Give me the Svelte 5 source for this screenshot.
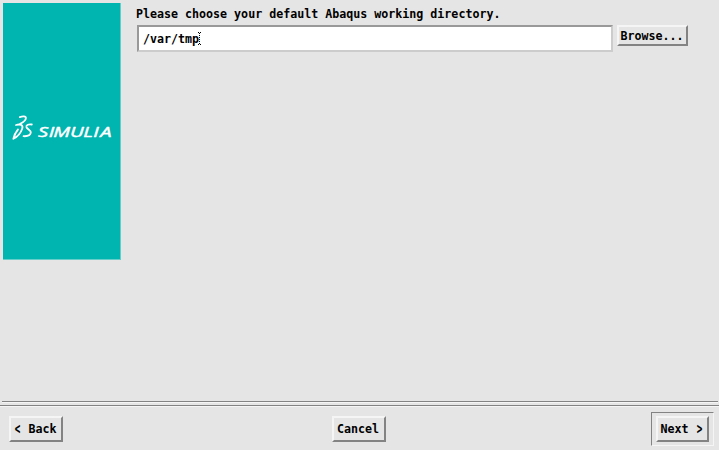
<script>
  let directory = $state('/var/tmp');
</script>

<div class="wizard">
  <main>
    <aside>
      <svg width="117" height="256" viewBox="3 3 117 256" aria-label="DS Simulia">
        <g class="mark">
          <path d="M19.8 117.1C22.5 116.1 25.9 116 25.9 117.9C25.9 119.6 22.8 122.4 20.2 123.8" />
          <path d="M16 125C20.8 123.6 23.4 125.2 22.2 128.8C20.8 132.8 17.6 136.8 13.4 138.8C14 136 15.8 132.2 18 129.4" />
          <path d="M31.8 124.5C28.7 123.9 26 125 26.4 127C26.9 129.2 31.2 130.3 30.8 132.7C30.4 135.3 27.1 136.4 23.6 136.2" />
        </g>
        <g transform="translate(0 137) scale(1.4 1)">
          <text x="27.2 34.9 38.1 50 59.4 66.6 71.6" y="0">SIMULIA</text>
        </g>
      </svg>
    </aside>
    <section>
      <div class="label">Please choose your default Abaqus working directory.</div>
      <div class="row">
        <div class="field"><span>{directory}</span><svg class="caret" width="3" height="13" viewBox="0 0 3 13" shape-rendering="crispEdges"><path d="M0 0h1v1H0zM2 0h1v1H2zM1 1h1v1H1zM1 3h1v1H1zM1 5h1v1H1zM1 7h1v1H1zM1 9h1v1H1zM1 11h1v1H1zM0 12h1v1H0zM2 12h1v1H2z" /></svg></div>
        <button class="browse">Browse...</button>
      </div>
    </section>
  </main>
  <div class="rule"></div>
  <footer>
    <button><span class="arrow">&lt;</span> Back</button>
    <button class="cancel">Cancel</button>
    <div class="default"><button>Next <span class="arrow">&gt;</span></button></div>
  </footer>
</div>

<style>
  :global(body) { margin: 0; background: #e5e5e5; }
  .wizard {
    box-sizing: border-box;
    width: 719px;
    height: 450px;
    display: flex;
    flex-direction: column;
    overflow: hidden;
    background: #e5e5e5;
    color: #000;
    font: bold 11.65px/16px "DejaVu Sans Mono", monospace;
  }
  main { height: 401px; display: flex; box-sizing: border-box; padding: 3px 0 0 3px; }
  aside {
    width: 117px;
    height: 256px;
    background: #00b4af;
    border-right: 1px solid #65cdca;
    border-bottom: 1px solid #65cdca;
  }
  aside svg { display: block; }
  .mark { fill: none; stroke: #fff; stroke-width: 1.8; stroke-linecap: round; stroke-linejoin: round; }
  text { font: italic 500 14.4px "Open Sans", sans-serif; fill: #fff; stroke: #fff; stroke-width: 0.45; stroke-linejoin: round; }
  section { padding: 3px 0 0 16px; }
  .label { height: 16px; margin-left: -1px; }
  .row { display: flex; gap: 4px; margin-top: 3px; align-items: flex-start; }
  .field {
    box-sizing: border-box;
    width: 476px;
    height: 27px;
    display: flex;
    align-items: center;
    padding-left: 4px;
    background: #fff;
    border: 2px solid;
    border-color: #999 #ccc #ccc #999;
  }
  .field span { width: 55px; height: 16px; }
  .caret { flex: none; }
  button {
    box-sizing: border-box;
    width: 54px;
    height: 26px;
    padding: 0 1px 1px 0;
    border: 2px solid;
    border-color: #f5f5f5 #838383 #838383 #f5f5f5;
    border-radius: 0;
    background: #e5e5e5;
    color: #000;
    font: inherit;
    text-align: center;
    white-space: pre;
  }
  .arrow { display: inline-block; transform: scale(0.8, 1.35); }
  .browse { width: 71px; height: 21px; padding: 0 1px 0 0; line-height: 16px; }
  .cancel { margin-left: 3px; }
  .rule {
    box-sizing: border-box;
    height: 5px;
    border-bottom: 1px solid #838383;
    background: linear-gradient(#838383 1px, #f5f5f5 1px, #f5f5f5 2px, transparent 2px) 2px 0 / 716px 4px no-repeat;
  }
  footer {
    height: 44px;
    box-sizing: border-box;
    padding: 5px 5px 4px 9px;
    display: flex;
    justify-content: space-between;
    align-items: flex-start;
    border-top: 1px solid #f5f5f5;
  }
  footer > button { margin-top: 4px; }
  .default {
    box-sizing: border-box;
    width: 63px;
    height: 34px;
    padding: 3px 4px;
    border: 1px solid;
    border-color: #838383 #f5f5f5 #f5f5f5 #838383;
  }
  .default button { display: block; width: 53px; padding-right: 2px; }
</style>
